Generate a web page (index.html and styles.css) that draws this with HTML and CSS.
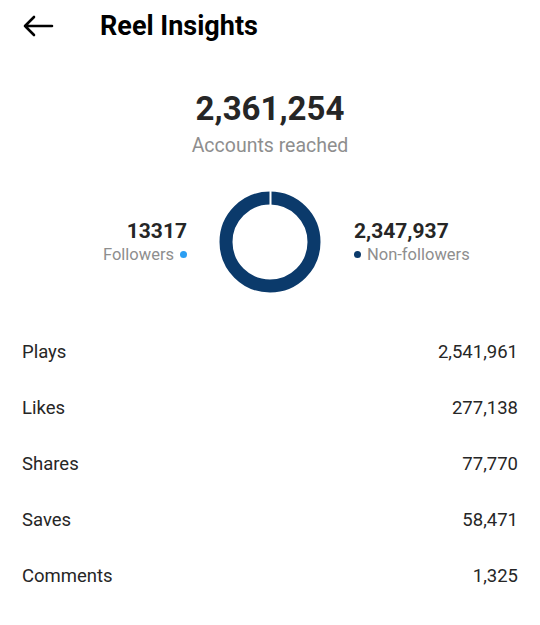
FILE: index.html
```html
<!DOCTYPE html>
<html>
<head>
<meta charset="utf-8">
<link rel="stylesheet" href="styles.css">
</head>
<body>
<div class="page">
  <header class="header">
    <svg class="back" width="32" height="22" viewBox="0 0 32 22">
      <path d="M30 11 H3 M12 2 L3 11 L12 20" fill="none" stroke="#000" stroke-width="2.6" stroke-linecap="round" stroke-linejoin="round"/>
    </svg>
    <h1 class="title">Reel Insights</h1>
  </header>
  <section class="reach">
    <div class="reach-num">2,361,254</div>
    <div class="reach-label">Accounts reached</div>
  </section>
  <section class="split">
    <div class="side left">
      <div class="side-num">13317</div>
      <div class="side-label">Followers <span class="dot light"></span></div>
    </div>
    <svg class="donut" width="102" height="102" viewBox="0 0 102 102">
      <circle cx="51" cy="51" r="44" fill="none" stroke="#0b3a6b" stroke-width="13"/>
      <rect x="50.5" y="0" width="2" height="16" fill="#fff"/>
    </svg>
    <div class="side right">
      <div class="side-num">2,347,937</div>
      <div class="side-label"><span class="dot dark"></span> Non-followers</div>
    </div>
  </section>
  <section class="stats">
    <div class="row"><span>Plays</span><span>2,541,961</span></div>
    <div class="row"><span>Likes</span><span>277,138</span></div>
    <div class="row"><span>Shares</span><span>77,770</span></div>
    <div class="row"><span>Saves</span><span>58,471</span></div>
    <div class="row"><span>Comments</span><span>1,325</span></div>
  </section>
</div>
</body>
</html>
```
FILE: styles.css
```css
html, body {
  margin: 0;
  padding: 0;
  background: #fff;
}
body {
  font-family: Roboto, "Noto Sans", Arial, sans-serif;
  color: #262626;
}
.page {
  width: 540px;
  height: 625px;
  overflow: hidden;
}
.header {
  display: flex;
  align-items: center;
  height: 52px;
  padding-left: 22px;
}
.back {
  display: block;
  margin-right: 46px;
}
.title {
  margin: 0;
  font-size: 27px;
  font-weight: 700;
  color: #000;
  line-height: 52px;
}
.reach {
  display: flex;
  flex-direction: column;
  align-items: center;
  padding-top: 37px;
}
.reach-num {
  font-size: 33px;
  font-weight: 700;
  line-height: 40px;
}
.reach-label {
  font-size: 19.5px;
  color: #8e8e8e;
  line-height: 24px;
  margin-top: 5px;
}
.split {
  display: grid;
  grid-template-columns: 1fr 102px 1fr;
  column-gap: 32px;
  align-items: center;
  padding-top: 33px;
}
.side {
  display: flex;
  flex-direction: column;
}
.side.left { align-items: flex-end; }
.side.right { align-items: flex-start; margin-left: 1px; }
.side-num {
  font-size: 21px;
  font-weight: 700;
  line-height: 25px;
}
.side-label {
  font-size: 16.5px;
  color: #8e8e8e;
  line-height: 22px;
  display: flex;
  align-items: center;
  gap: 6px;
}
.dot {
  width: 7px;
  height: 7px;
  border-radius: 50%;
  display: inline-block;
}
.dot.light { background: #2b9ef2; }
.dot.dark { background: #0b3a6b; }
.donut { display: block; }
.stats {
  padding: 31px 22px 0 22px;
}
.row {
  display: flex;
  justify-content: space-between;
  align-items: center;
  height: 56px;
  font-size: 18.5px;
  color: #262626;
}
```
